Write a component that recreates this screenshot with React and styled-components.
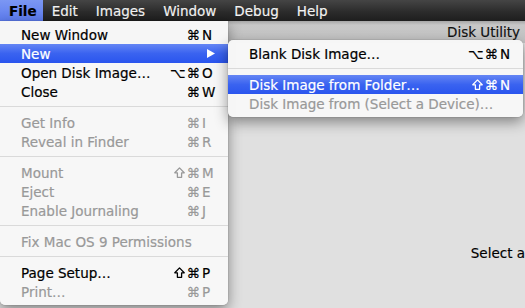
import React from 'react';
import styled, { createGlobalStyle } from 'styled-components';

const Global = createGlobalStyle`
  html, body { margin: 0; padding: 0; }
  body {
    width: 525px; height: 308px; overflow: hidden; background: #e0e0e0;
    font-family: "DejaVu Sans", "Liberation Sans", sans-serif;
  }
`;

const Screen = styled.div`
  position: relative; width: 525px; height: 308px;
  display: flex; flex-direction: column; overflow: hidden;
`;

const MenuBar = styled.div`
  height: 21px; flex-shrink: 0; display: flex; align-items: stretch;
  background: linear-gradient(#454545, #2c2c2c 55%, #1e1e1e);
`;

const BarItem = styled.div`
  display: flex; align-items: center;
  padding: ${p => (p.$active ? '0 6px 0 9px' : '0 9px')};
  font-size: 13.5px; white-space: nowrap;
  -webkit-text-stroke: 0.15px currentColor;
  color: ${p => (p.$active ? '#000' : '#f2f2f2')};
  font-weight: ${p => (p.$active ? 'bold' : 'normal')};
  background: ${p => (p.$active ? 'linear-gradient(#7b97f3, #5c7bee)' : 'transparent')};
`;

const Desktop = styled.div`
  flex: 1; display: flex; flex-direction: column; background: #e0e0e0;
`;

const TitleBar = styled.div`
  height: 22px; display: flex; align-items: center; justify-content: flex-end;
  padding-right: 5px; font-size: 13.5px; color: #111;
  -webkit-text-stroke: 0.15px currentColor;
  background: linear-gradient(#a6a6a6 0, #c7c7c7 4px, #c3c3c3 100%);
`;

const Body = styled.div`
  flex: 1; display: flex; align-items: flex-start; justify-content: flex-end;
  padding-top: 202px; font-size: 13.5px; color: #000; white-space: nowrap;
  -webkit-text-stroke: 0.15px currentColor;
`;

const Dropdown = styled.div`
  position: absolute; left: ${p => p.$x}px; top: ${p => p.$y}px; width: ${p => p.$w}px;
  padding: 4px 0; box-sizing: border-box;
  background: rgba(247, 247, 247, 0.98);
  border-radius: ${p => (p.$sub ? '5px' : '0 0 5px 5px')};
  box-shadow: 0 5px 14px rgba(0, 0, 0, 0.42), 0 0 0 0.5px rgba(0, 0, 0, 0.12);
`;

const Row = styled.div`
  display: flex; align-items: center; height: 19px;
  padding: 0 ${p => p.$pr}px 0 21px;
  font-size: 13.5px; white-space: nowrap;
  -webkit-text-stroke: 0.2px currentColor;
  color: ${p => (p.$disabled ? '#999' : p.$hl ? '#fff' : '#000')};
  background: ${p => (p.$hl ? 'linear-gradient(#6586f4, #3a63f0 50%, #2a55ee)' : 'transparent')};
`;

const Label = styled.span`flex: 1;`;
const Mods = styled.span`
  display: flex; align-items: center; justify-content: flex-end; gap: 1px; margin-right: 2px;
`;
const Key = styled.span`width: ${p => p.$w}px;`;

const Sep = styled.div`
  height: 1px; background: #dadada; margin: 5px 0 6px;
`;

const Arrow = () => (
  <svg width="8" height="9" viewBox="0 0 8 9" style={{ marginRight: 1 }}>
    <polygon points="0,0 8,4.5 0,9" fill="#fff" />
  </svg>
);

const Shift = () => (
  <svg width="11" height="11" viewBox="0 0 11 11" style={{ marginRight: 1 }}>
    <polygon points="5.5,0.9 10.2,5.8 7.6,5.8 7.6,10.3 3.4,10.3 3.4,5.8 0.8,5.8"
      fill="none" stroke="currentColor" strokeWidth="1.3" strokeLinejoin="round" />
  </svg>
);

const ModGlyphs = ({ mods }) => (
  <Mods>
    {mods.split('').map((c, i) => (c === '⇧' ? <Shift key={i} /> : <span key={i}>{c}</span>))}
  </Mods>
);

const Item = ({ label, mods = '', k, disabled, hl, kw, pr, sub }) => (
  <Row $disabled={disabled} $hl={hl} $pr={pr}>
    <Label>{label}</Label>
    {sub ? <Arrow /> : k ? (<><ModGlyphs mods={mods} /><Key $w={kw}>{k}</Key></>) : null}
  </Row>
);

export default function App() {
  const m = { kw: 14, pr: 12 };
  const s = { kw: 10, pr: 13 };
  return (
    <Screen>
      <Global />
      <MenuBar>
        <BarItem $active>File</BarItem>
        <BarItem>Edit</BarItem>
        <BarItem>Images</BarItem>
        <BarItem>Window</BarItem>
        <BarItem>Debug</BarItem>
        <BarItem>Help</BarItem>
      </MenuBar>
      <Desktop>
        <TitleBar>Disk Utility</TitleBar>
        <Body>Select a</Body>
      </Desktop>

      <Dropdown $x={0} $y={21} $w={228}>
        <Item {...m} label="New Window" mods="⌘" k="N" />
        <Item {...m} label="New" hl sub />
        <Item {...m} label="Open Disk Image…" mods="⌥⌘" k="O" />
        <Item {...m} label="Close" mods="⌘" k="W" />
        <Sep />
        <Item {...m} label="Get Info" mods="⌘" k="I" disabled />
        <Item {...m} label="Reveal in Finder" mods="⌘" k="R" disabled />
        <Sep />
        <Item {...m} label="Mount" mods="⇧⌘" k="M" disabled />
        <Item {...m} label="Eject" mods="⌘" k="E" disabled />
        <Item {...m} label="Enable Journaling" mods="⌘" k="J" disabled />
        <Sep />
        <Item {...m} label="Fix Mac OS 9 Permissions" disabled />
        <Sep />
        <Item {...m} label="Page Setup…" mods="⇧⌘" k="P" />
        <Item {...m} label="Print…" mods="⌘" k="P" disabled />
      </Dropdown>

      <Dropdown $x={228} $y={40} $w={295} $sub>
        <Item {...s} label="Blank Disk Image…" mods="⌥⌘" k="N" />
        <Sep />
        <Item {...s} label="Disk Image from Folder…" mods="⇧⌘" k="N" hl />
        <Item {...s} label="Disk Image from (Select a Device)…" disabled />
      </Dropdown>
    </Screen>
  );
}
